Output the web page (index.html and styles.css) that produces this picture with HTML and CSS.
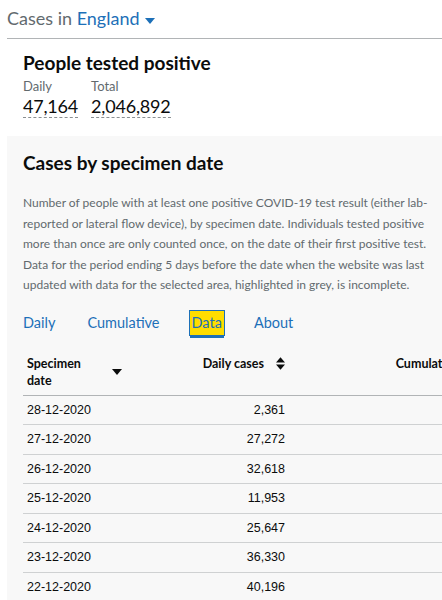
FILE: index.html
```html
<!DOCTYPE html>
<html lang="en">
<head>
<meta charset="utf-8">
<title>Cases in England</title>
<link rel="stylesheet" href="styles.css">
</head>
<body>
<header class="area">
  <h1 class="area-title">Cases in <a class="area-link" href="#">England<svg class="caret" viewBox="0 0 10 6" width="10" height="6"><path d="M0 0h10L5 6z" fill="#1d70b8"/></svg></a></h1>
</header>
<section class="headline">
  <h2 class="headline-title">People tested positive</h2>
  <div class="stats">
    <div class="stat">
      <span class="stat-label">Daily</span>
      <span class="stat-value">47,164</span>
    </div>
    <div class="stat">
      <span class="stat-label">Total</span>
      <span class="stat-value">2,046,892</span>
    </div>
  </div>
</section>
<section class="panel">
  <h3 class="panel-title">Cases by specimen date</h3>
  <p class="panel-desc">Number of people with at least one positive COVID-19 test result (either lab-reported or lateral flow device), by specimen date. Individuals tested positive more than once are only counted once, on the date of their first positive test. Data for the period ending 5 days before the date when the website was last updated with data for the selected area, highlighted in grey, is incomplete.</p>
  <nav class="tabs">
    <a class="tab" href="#">Daily</a>
    <a class="tab" href="#">Cumulative</a>
    <a class="tab tab-active" href="#">Data</a>
    <a class="tab" href="#">About</a>
  </nav>
  <div class="table-wrap">
    <table class="data">
      <thead>
        <tr>
          <th class="col-date"><div class="th-inner th-date"><span>Specimen<br>date</span><svg class="sort" viewBox="0 0 10 6" width="10" height="6"><path d="M0 0h10L5 6z" fill="#0b0c0c"/></svg></div></th>
          <th class="col-num"><div class="th-inner th-right"><span>Daily cases</span><svg class="sort2" viewBox="0 0 10 14" width="9" height="13"><path d="M0 6h10L5 0zM0 8h10L5 14z" fill="#0b0c0c"/></svg></div></th>
          <th class="col-cum"><div class="th-inner th-right"><span>Cumulative cases</span><svg class="sort2" viewBox="0 0 10 14" width="9" height="13"><path d="M0 6h10L5 0zM0 8h10L5 14z" fill="#0b0c0c"/></svg></div></th>
        </tr>
      </thead>
      <tbody>
        <tr><td>28-12-2020</td><td class="num">2,361</td><td class="num"></td></tr>
        <tr><td>27-12-2020</td><td class="num">27,272</td><td class="num"></td></tr>
        <tr><td>26-12-2020</td><td class="num">32,618</td><td class="num"></td></tr>
        <tr><td>25-12-2020</td><td class="num">11,953</td><td class="num"></td></tr>
        <tr><td>24-12-2020</td><td class="num">25,647</td><td class="num"></td></tr>
        <tr><td>23-12-2020</td><td class="num">36,330</td><td class="num"></td></tr>
        <tr><td>22-12-2020</td><td class="num">40,196</td><td class="num"></td></tr>
      </tbody>
    </table>
  </div>
</section>
</body>
</html>
```
FILE: styles.css
```css
html, body {
  margin: 0;
  padding: 0;
  background: #ffffff;
  overflow: hidden;
}
body {
  font-family: Lato, "Liberation Sans", sans-serif;
  color: #0b0c0c;
  width: 442px;
}
.area {
  margin-left: 7px;
  border-bottom: 1px solid #b1b4b6;
  height: 39px;
  box-sizing: border-box;
}
.area-title {
  margin: 0;
  padding-top: 5px;
  font-size: 18px;
  font-weight: 400;
  line-height: 26px;
  color: #626a6e;
}
.area-link {
  color: #1d70b8;
  text-decoration: none;
}
.caret {
  margin-left: 5px;
  vertical-align: 1px;
}
.headline {
  padding: 11px 23px 0;
  height: 97px;
  box-sizing: border-box;
}
.headline-title {
  margin: 0;
  font-size: 19px;
  font-weight: 700;
  line-height: 26px;
}
.stats {
  display: flex;
  gap: 13px;
  margin-top: 2px;
}
.stat {
  display: flex;
  flex-direction: column;
}
.stat-label {
  font-size: 13px;
  line-height: 16px;
  color: #626a6e;
}
.stat-value {
  font-size: 18px;
  line-height: 22px;
  letter-spacing: -0.2px;
  margin-top: 1px;
  border-bottom: 1px dashed #8a8f92;
}
.panel {
  margin-left: 7px;
  background: #f8f8f8;
  padding: 14px 0 0 16px;
  height: 464px;
  box-sizing: border-box;
  overflow: hidden;
}
.panel-title {
  margin: 0;
  font-size: 19px;
  font-weight: 700;
  line-height: 26px;
}
.panel-desc {
  margin: 17px 0 0;
  width: 416px;
  font-size: 12px;
  line-height: 20.5px;
  color: #626a6e;
}
.tabs {
  display: flex;
  gap: 32px;
  margin-top: 12px;
  height: 30px;
  align-items: center;
}
.tab {
  font-size: 14.5px;
  color: #1d70b8;
  text-decoration: none;
  line-height: 22px;
}
.tab-active {
  background: #ffdd00;
  color: #1d70b8;
  outline: 1px solid #1d70b8;
  box-shadow: 0 3px 0 #1d70b8;
  padding: 1px 2px;
  margin: 0 -2px;
}
.table-wrap {
  margin-top: 10px;
  width: 600px;
}
.data {
  border-collapse: collapse;
  font-size: 12.5px;
}
.data th {
  font-weight: 700;
  font-size: 12.5px;
  text-align: left;
  vertical-align: top;
  padding: 7px 4px 6px;
  border-bottom: 1px solid #b1b4b6;
  line-height: 17px;
}
.th-inner {
  display: flex;
  align-items: flex-start;
  gap: 12px;
}
.th-date {
  justify-content: space-between;
  align-items: center;
  padding-right: 27px;
}
.th-right {
  justify-content: flex-end;
}
.col-date { width: 122px; }
.col-num { width: 128px; }
.col-cum { width: 220px; }
.sort { margin-top: 1px; }
.sort2 { margin-top: 2px; }
.data td {
  font-family: "Liberation Sans", Arial, sans-serif;
  font-size: 12.5px;
  padding: 7px 4px;
  line-height: 14.6px;
  border-bottom: 1px solid #cfd1d2;
  color: #0b0c0c;
}
.data td.num { text-align: right; }
```
